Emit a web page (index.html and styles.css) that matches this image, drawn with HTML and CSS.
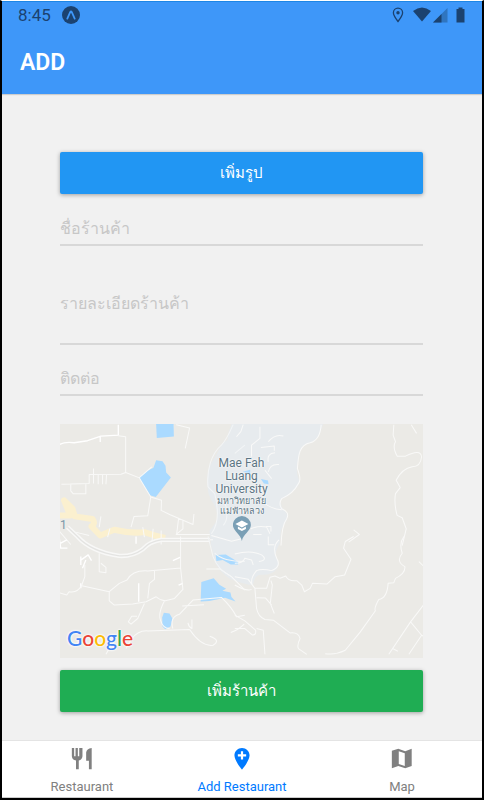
FILE: index.html
```
<!DOCTYPE html>
<html lang="th">

<head>
    <meta charset="UTF-8">
    <meta name="viewport" content="width=device-width, initial-scale=1.0">
    <title>Add Restaurant</title>
    <link rel="stylesheet" href="styles.css">
</head>

<body>

    <header class="header">
        <div class="status-bar">
            <span class="time">8:45</span>
            <svg class="expo" width="18" height="18" viewBox="0 0 18 18">
                <circle cx="9" cy="9" r="9" fill="#1b4270"/>
                <path d="M5.3 12.6 L8.3 6 Q9 4.800 9.700 6 L12.700 12.600" fill="none" stroke="#3e97f9" stroke-width="1.800" stroke-linecap="round"/>
            </svg>
            <div class="status-icons">
                <svg width="12" height="16" viewBox="0 0 12 16">
                    <path d="M6 14.500 C3.500 11.200 1.400 8.300 1.400 5.700 a4.600 4.600 0 0 1 9.200 0 C10.600 8.300 8.500 11.200 6 14.500z" fill="none" stroke="#1b4270" stroke-width="1.300"/>
                    <circle cx="6" cy="5.700" r="1.700" fill="#1b4270"/>
                </svg>
                <svg class="wifi" width="18" height="16" viewBox="0 0 18 16">
                    <path d="M0 4 Q9 -3 18 4 L9 14.500z" fill="#1b4270"/>
                </svg>
                <svg class="signal" width="15" height="16" viewBox="0 0 15 16">
                    <path d="M14.500 1 V15.500 H0z" fill="#2f75c0"/>
                    <path d="M8.500 7 V15.500 H0z" fill="#1b4270"/>
                </svg>
                <svg class="battery" width="9" height="16" viewBox="0 0 9 16">
                    <path d="M2.500 0.500 h4 v1.500 h2 v13.500 h-8 v-13.500 h2z" fill="#1b4270"/>
                </svg>
            </div>
        </div>
        <h1>ADD</h1>
    </header>

    <main>
        <form id="restaurantForm">
            <button type="button" class="btn btn-blue">เพิ่มรูป</button>
            <input type="text" class="field" name="name" placeholder="ชื่อร้านค้า" aria-label="ชื่อร้านค้า">
            <textarea class="field detail" name="detail" placeholder="รายละเอียดร้านค้า" aria-label="รายละเอียดร้านค้า"></textarea>
            <input type="text" class="field" name="contact" placeholder="ติดต่อ" aria-label="ติดต่อ">

            <div class="map">
                <svg class="map-tiles" viewBox="0 0 1092 699" preserveAspectRatio="xMidYMid slice">
                    <rect width="1092" height="699" fill="#ebeae6"/>
                    <!-- campus area -->
                    <path d="M516 0 Q505 25 504 48 C480 60 480 85 460 110 C440 140 442 180 448 210 C460 240 478 250 472 290 L450 320 L455 360 L470 420 Q485 445 512 463 Q540 475 568 480 L580 480 Q585 450 605 450 C640 455 665 430 653 405 Q640 390 660 358 L664 320 C670 300 690 285 680 265 Q660 250 664 225 C690 215 715 190 720 175 Q708 145 712 120 Q720 85 725 70 C745 55 775 55 782 20 L790 0z" fill="#e7ebee"/>
                    <!-- water -->
                    <g fill="#aadaff">
                        <path d="M291 0 h52 l1 37 l-51 5z"/>
                        <path d="M291 108 L310 111 L319 125 L321 145 L335 160 L290 218 L272 213 L240 160 L265 140 L283 131z"/>
                        <path d="M604 164 l21 5 l2 11 l-14 -2z M550 143 l22 -6 v12z"/>
                        <path d="M469 391 L499 390 L536 412 L536 420 L514 420 L490 406 L471 409z"/>
                        <path d="M426 472 L463 461 L480 480 L500 492 L489 498 L513 503 L516 517 L528 530 L497 519 L450 529 L424 530z"/>
                        <path d="M314 564 L331 566 L340 582 L334 605 L318 613 L310 605 L309 578z"/>
                    </g>
                    <g class="roads">
                        <g transform="translate(-14 -12)">
                            <path class="yellow" d="M15 285 H48 L30 240 L55 265 L62 288 L115 296 Q125 310 112 318 L138 345 Q155 338 180 328 Q230 340 270 335 L300 345 L332 352"/>
                            <path class="wide" d="M14 75 Q30 64 60 68 L100 62 L140 48 L192 45 V14 M138 48 v18"/>
                            <path d="M192 47 L214 50 V157 L255 173 L289 230 L321 240 L320 270 L347 283 L415 312 L418 281 M214 157 L200 162 L105 163 V190 L22 192 M95 190 V220 H57 L50 212 V190 M118 145 V190 M132 163 V192 M145 163 V192 M157 163 L155 192 M254 173 L292 140 M289 230 L280 286 L239 288 L230 320 M140 288 L135 320 M365 14 L405 24 L392 85 M372 295 L366 343 M385 300 V325 L365 342 H465"/>
                            <path d="M64 335 L105 345 M167 324 L160 350 M265 320 L270 350 M296 325 L292 372 M320 330 V372 M14 330 L50 372 M330 362 L475 358 M470 345 L530 362 L560 355"/>
                            <path class="faint" d="M535 14 Q515 60 500 75 C470 100 455 150 460 200 M460 200 L480 220 Q500 300 470 340 M540 100 l30 -25 M510 245 q15 50 -5 70"/>
                        </g>
                        <g transform="translate(526 -12)">
                            <path d="M258 14 Q255 60 225 68 C190 75 190 110 187 145 Q200 180 190 190 Q175 220 140 235 Q130 250 140 265 Q165 275 155 295 Q140 315 138 375"/>
                            <path d="M5 50 L18 35 L25 14 M75 20 V55 L50 75 V110 M78 82 L118 78 V92 M100 65 Q120 40 145 48 M100 125 Q95 100 120 98 M100 155 Q105 130 132 133 M90 150 l20 25 M85 245 Q105 265 140 268 M48 325 Q70 315 95 320 L105 340 M93 318 h15 v15 M55 342 h25"/>
                            <path d="M475 14 L473 45 L480 65 Q470 80 485 108 L510 108 Q555 85 558 110 Q555 140 530 140 Q500 145 482 180 L494 202 L480 220 Q475 250 485 285 L500 292 L512 325 L500 375 M527 14 L543 40 M355 328 L372 342 L340 365"/>
                        </g>
                        <g transform="translate(-14 336)">
                            <path class="highway" d="M40 -28 L70 0 Q110 45 195 58 Q235 60 265 38 Q285 15 320 10 H465"/>
                            <path class="divider" d="M40 -28 L70 0 Q110 45 195 58 Q235 60 265 38 Q285 15 320 10 H465"/>
                            <path class="wide" d="M15 0 L20 35 L40 35 M20 20 L38 10 M80 60 V85 M78 72 L102 55 L112 72 M95 70 L85 95 M80 140 V155 M355 72 L378 62 M372 145 L385 140 M245 0 V22 M253 140 V195"/>
                            <path d="M92 85 V120 L83 145 Q70 170 45 165 L38 175 L14 168 M83 147 L165 165 L195 140 L218 130 Q235 100 280 103 L378 94 V0 M165 165 V192 L180 205 L235 202 L275 195 L305 180 Q315 190 332 192 L360 185 L385 158 L378 94 M135 50 V105 L155 108 V92 L140 80 M300 100 V128 L285 140 L280 185 M270 200 L250 245 L230 262 L222 255 L232 238 H248 M215 335 L230 308 Q250 280 280 282 L405 278 M405 278 Q440 330 475 325 Q500 310 465 298 M330 192 Q310 230 318 250 Q325 275 345 275 M355 275 Q345 240 375 232 L415 190 L500 182 Q530 210 545 240 L570 235 M383 208 L448 204 M400 258 Q402 270 412 275 V248 M528 287 Q550 280 568 262 M165 335 L155 352 M455 97 H495 L530 120 L570 160"/>
                            <path class="faint" d="M460 0 L475 60 Q490 100 530 120 M480 50 Q505 75 570 75"/>
                        </g>
                        <g transform="translate(526 336)">
                            <path d="M132 10 Q110 30 125 65 Q140 90 110 102 Q80 95 65 102 Q45 125 52 145 M0 120 L40 128 L60 155 M0 145 Q35 165 50 158 M0 80 Q25 80 30 65 L50 70 L55 85 M0 52 Q50 40 80 55 Q100 70 72 75 M100 0 V25 H118"/>
                            <path d="M60 155 L95 155 L105 122 L120 118 L135 125 L152 118 Q160 135 185 132 L200 145 L208 165 L225 155 L232 140 L275 142 L300 120 L328 115 L347 68 L325 35 L330 15 L355 0 M108 132 L112 145 L106 200 L118 230 M60 155 L65 215 Q70 240 90 248 L115 250 L165 288 Q190 285 195 305 Q185 325 190 335 L215 352 M65 183 L92 184 L110 205 M0 235 L30 252 L62 280 Q65 295 52 294 L30 275 L0 275 M65 275 L85 280 L90 352"/>
                            <path d="M505 0 Q490 20 500 50 Q480 75 508 90 Q510 110 480 125 L475 138 L458 140 Q455 185 430 188 Q415 215 420 222 L375 285 L330 340 Q300 355 270 350 M550 75 L565 90 M565 203 L525 255 L460 352 M525 255 L558 295 L565 298 M558 295 L520 352 M472 335 l15 8"/>
                        </g>
                    </g>
                </svg>
                <span class="road-label">1</span>
                <div class="place">
                    <span>Mae Fah<br>Luang<br>University</span>
                    <small>มหาวิทยาลัย<br>แม่ฟ้าหลวง</small>
                    <svg width="18" height="25" viewBox="0 0 18 25">
                        <path d="M9 25 C8 18 0 15 0 9 a9 9 0 0 1 18 0 C18 15 10 18 9 25z" fill="#7a9fb5"/>
                        <path d="M2.500 8 L9 4.500 L15.500 8 L9 11.500z M5 10.500 L9 12.700 L13 10.500 V13 L9 15 L5 13z" fill="#fff"/>
                    </svg>
                </div>
                <div class="google"><span class="g-blue">G</span><span class="g-red">o</span><span class="g-yellow">o</span><span class="g-blue">g</span><span class="g-green">l</span><span class="g-red">e</span></div>
            </div>

            <button type="submit" class="btn btn-green">เพิ่มร้านค้า</button>
        </form>
    </main>

    <nav class="tabs">
        <a href="#restaurant">
            <svg width="24" height="26" viewBox="0 0 24 26">
                <path d="M1 1 h2.500 v9 h1.500 V1 h2.500 v9 h1.500 V1 H12.500 v9 a5 5 0 0 1 -4 4.500 V24 H5.500 V14.500 A5 5 0 0 1 1 10z M22.500 1 V24 h-3 V15 H16.500 V6 Q17 1.500 22.500 1z" fill="#808080"/>
            </svg>
            Restaurant
        </a>
        <a href="#add" class="active">
            <svg width="24" height="26" viewBox="0 0 24 26">
                <path fill-rule="evenodd" d="M12 1 C7.500 1 3.800 4.600 3.800 9 C3.800 15 12 24.500 12 24.500 S20.200 15 20.200 9 C20.200 4.600 16.500 1 12 1z M10.800 4.500 h2.400 v3.300 h3.300 v2.400 h-3.300 v3.300 h-2.400 v-3.300 H7.500 V7.800 h3.300z" fill="#007aff"/>
            </svg>
            Add Restaurant
        </a>
        <a href="#map">
            <svg width="24" height="26" viewBox="0 0 24 26">
                <path fill-rule="evenodd" d="M1 4 L8 2 L15.500 4.500 L22.500 2 V20.500 L15.500 23 L8 20.500 L1 23z M8.500 4.600 V18.300 L15 20.500 V6.800z" fill="#808080"/>
            </svg>
            Map
        </a>
    </nav>

</body>

</html>
```
FILE: styles.css
```
* {
    box-sizing: border-box;
}

body {
    display: flex;
    flex-direction: column;
    min-height: 100vh;
    margin: 0;
    border: 2px solid #000;
    border-top: 1px solid #fff;
    background-color: #f1f1f1;
    font-family: Roboto, "Noto Sans", sans-serif;
}

.header {
    height: 93px;
    background-color: #3e97f9;
    border-top: 1px solid #1e86e5;
    box-shadow: 0 1px 1px rgba(0, 0, 0, 0.15);
}

.status-bar {
    display: flex;
    align-items: center;
    height: 26px;
    padding: 0 17px 0 16px;
    color: #1b4270;
}

.time {
    font-size: 17px;
}

.expo {
    margin-left: 11px;
}

.status-icons {
    display: flex;
    margin-left: auto;
}

.wifi {
    margin-left: 9px;
}

.signal {
    margin-left: 2px;
}

.battery {
    margin-left: 8px;
}

h1 {
    margin: 20px 18px 0;
    color: #fff;
    font-size: 23px;
    font-weight: 600;
    line-height: 30px;
}

main {
    flex: 1;
    padding: 58px 59px 28px 58px;
}

#restaurantForm {
    display: flex;
    flex-direction: column;
}

.btn {
    height: 42px;
    padding: 0;
    border: none;
    border-radius: 2px;
    color: #fff;
    font-family: inherit;
    font-size: 15px;
    font-weight: 500;
    cursor: pointer;
    box-shadow: 0 1px 4px rgba(0, 0, 0, 0.35);
}

.btn-blue {
    background-color: #2196f3;
    margin-bottom: 16px;
}

.btn-green {
    background-color: #1fad53;
    margin-top: 12px;
}

.field {
    height: 36px;
    padding: 3px 0 0;
    border: none;
    border-bottom: 2px solid #d8d8d8;
    border-radius: 0;
    outline: none;
    background: none;
    font-family: inherit;
    font-size: 16px;
    line-height: 24px;
    resize: none;
}

.field::placeholder {
    color: #c7c7c7;
    opacity: 1;
}

.detail {
    height: 56px;
    margin: 43px 0 15px;
}

.map {
    position: relative;
    height: 234px;
    margin-top: 28px;
    overflow: hidden;
}

.map-tiles {
    display: block;
    width: 100%;
    height: 100%;
}

.roads path {
    fill: none;
    stroke: #f9f9f8;
    stroke-width: 3;
    stroke-linejoin: round;
}

.roads .wide {
    stroke: #fff;
    stroke-width: 4;
}

.roads .faint {
    stroke: #f3f5f6;
}

.roads .yellow {
    stroke: #fbf0cf;
    stroke-width: 18;
}

.roads .highway {
    stroke: #f8f8f7;
    stroke-width: 13;
}

.roads .divider {
    stroke: #e4e4e2;
    stroke-width: 4;
}

.road-label {
    position: absolute;
    left: 0;
    top: 94px;
    color: #7b97a8;
    font-size: 12px;
}

.place {
    position: absolute;
    top: 33px;
    left: 50%;
    display: flex;
    flex-direction: column;
    align-items: center;
    transform: translateX(-50%);
    color: #5d7684;
    font-size: 12px;
    line-height: 13px;
    text-align: center;
    text-shadow: 0 0 2px #fff, 0 0 2px #fff;
}

.place small {
    font-size: 9px;
    line-height: 10px;
}

.google {
    position: absolute;
    left: 7px;
    bottom: 7px;
    font-family: Lato, sans-serif;
    font-size: 21px;
    font-weight: 500;
    line-height: 26px;
    text-shadow: 0 0 2px #fff, 0 0 2px #fff, 0 0 3px #fff;
}

.g-blue {
    color: #4285f4;
}

.g-red {
    color: #ea4335;
}

.g-yellow {
    color: #fbbc05;
}

.g-green {
    color: #34a853;
}

.tabs {
    display: flex;
    height: 58px;
    background-color: #fff;
    border-top: 1px solid #e4e4e4;
    border-bottom: 1px solid #ccc;
}

.tabs a {
    display: flex;
    flex: 1;
    flex-direction: column;
    align-items: center;
    gap: 6px;
    padding-top: 6px;
    color: #808080;
    font-size: 13px;
    line-height: 20px;
    text-decoration: none;
}

.tabs .active {
    color: #007aff;
}
```
